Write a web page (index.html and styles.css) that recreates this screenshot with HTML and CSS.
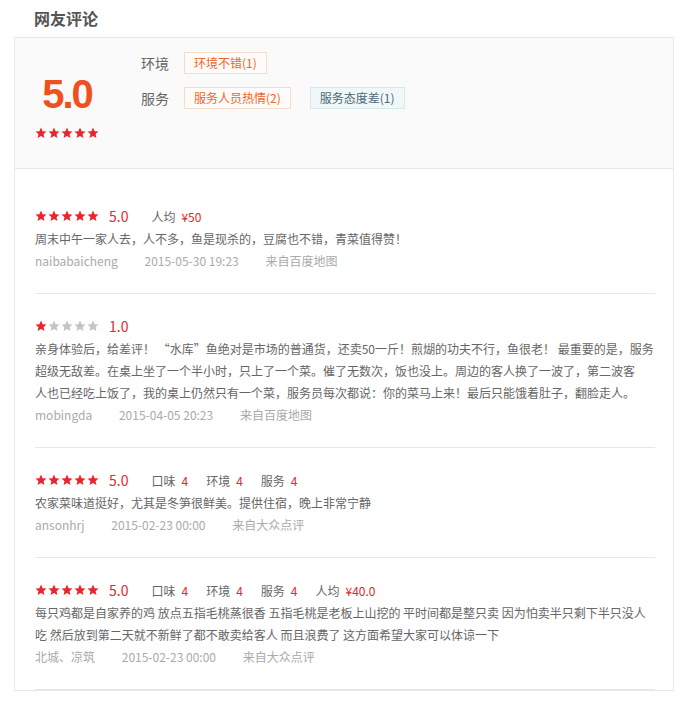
FILE: index.html
```html
<!DOCTYPE html>
<html lang="zh-CN">
<head>
    <meta charset="UTF-8">
    <meta name="viewport" content="width=device-width, initial-scale=1.0">
    <title>网友评论</title>
    <link rel="stylesheet" href="styles.css">
</head>
<body>

<svg class="svg-defs" xmlns="http://www.w3.org/2000/svg">
    <symbol id="star" viewBox="0 0 24 24">
        <path d="M12 1.2l3.2 7.2 7.8.7-5.9 5.2 1.8 7.7L12 18l-6.9 4 1.8-7.7L1 9.1l7.8-.7z"/>
    </symbol>
</svg>

<div class="page">
    <h2 class="title">网友评论</h2>
    <div class="comments">
        <div class="summary">
            <div class="score">
                <div class="score-num">5.0</div>
                <div class="stars stars-big">
                    <svg class="star on"><use href="#star"/></svg>
                    <svg class="star on"><use href="#star"/></svg>
                    <svg class="star on"><use href="#star"/></svg>
                    <svg class="star on"><use href="#star"/></svg>
                    <svg class="star on"><use href="#star"/></svg>
                </div>
            </div>
            <div class="tag-rows">
                <div class="tag-row">
                    <span class="tag-label">环境</span>
                    <span class="tag tag-good">环境不错(1)</span>
                </div>
                <div class="tag-row">
                    <span class="tag-label">服务</span>
                    <span class="tag tag-good">服务人员热情(2)</span>
                    <span class="tag tag-bad">服务态度差(1)</span>
                </div>
            </div>
        </div>

        <ul class="review-list">
            <li class="review">
                <div class="review-head">
                    <span class="stars">
                        <svg class="star on"><use href="#star"/></svg>
                        <svg class="star on"><use href="#star"/></svg>
                        <svg class="star on"><use href="#star"/></svg>
                        <svg class="star on"><use href="#star"/></svg>
                        <svg class="star on"><use href="#star"/></svg>
                    </span>
                    <span class="rating">5.0</span>
                    <span class="item"><span class="item-label">人均</span><span class="item-value">¥50</span></span>
                </div>
                <p class="review-text">周末中午一家人去，人不多，鱼是现杀的，豆腐也不错，青菜值得赞！</p>
                <div class="review-meta">
                    <span>naibabaicheng</span>
                    <span>2015-05-30 19:23</span>
                    <span>来自百度地图</span>
                </div>
            </li>
            <li class="review">
                <div class="review-head">
                    <span class="stars">
                        <svg class="star on"><use href="#star"/></svg>
                        <svg class="star"><use href="#star"/></svg>
                        <svg class="star"><use href="#star"/></svg>
                        <svg class="star"><use href="#star"/></svg>
                        <svg class="star"><use href="#star"/></svg>
                    </span>
                    <span class="rating">1.0</span>
                </div>
                <p class="review-text">亲身体验后，给差评！ “水库”鱼绝对是市场的普通货，还卖50一斤！煎煳的功夫不行，鱼很老！ 最重要的是，服务超级无敌差。在桌上坐了一个半小时，只上了一个菜。催了无数次，饭也没上。周边的客人换了一波了，第二波客<br>人也已经吃上饭了，我的桌上仍然只有一个菜，服务员每次都说：你的菜马上来！最后只能饿着肚子，翻脸走人。</p>
                <div class="review-meta">
                    <span>mobingda</span>
                    <span>2015-04-05 20:23</span>
                    <span>来自百度地图</span>
                </div>
            </li>
            <li class="review">
                <div class="review-head">
                    <span class="stars">
                        <svg class="star on"><use href="#star"/></svg>
                        <svg class="star on"><use href="#star"/></svg>
                        <svg class="star on"><use href="#star"/></svg>
                        <svg class="star on"><use href="#star"/></svg>
                        <svg class="star on"><use href="#star"/></svg>
                    </span>
                    <span class="rating">5.0</span>
                    <span class="item"><span class="item-label">口味</span><span class="item-value">4</span></span>
                    <span class="item"><span class="item-label">环境</span><span class="item-value">4</span></span>
                    <span class="item"><span class="item-label">服务</span><span class="item-value">4</span></span>
                </div>
                <p class="review-text">农家菜味道挺好，尤其是冬笋很鲜美。提供住宿，晚上非常宁静</p>
                <div class="review-meta">
                    <span>ansonhrj</span>
                    <span>2015-02-23 00:00</span>
                    <span>来自大众点评</span>
                </div>
            </li>
            <li class="review">
                <div class="review-head">
                    <span class="stars">
                        <svg class="star on"><use href="#star"/></svg>
                        <svg class="star on"><use href="#star"/></svg>
                        <svg class="star on"><use href="#star"/></svg>
                        <svg class="star on"><use href="#star"/></svg>
                        <svg class="star on"><use href="#star"/></svg>
                    </span>
                    <span class="rating">5.0</span>
                    <span class="item"><span class="item-label">口味</span><span class="item-value">4</span></span>
                    <span class="item"><span class="item-label">环境</span><span class="item-value">4</span></span>
                    <span class="item"><span class="item-label">服务</span><span class="item-value">4</span></span>
                    <span class="item"><span class="item-label">人均</span><span class="item-value">¥40.0</span></span>
                </div>
                <p class="review-text">每只鸡都是自家养的鸡 放点五指毛桃蒸很香 五指毛桃是老板上山挖的 平时间都是整只卖 因为怕卖半只剩下半只没人吃 然后放到第二天就不新鲜了都不敢卖给客人 而且浪费了 这方面希望大家可以体谅一下</p>
                <div class="review-meta">
                    <span>北城、凉筑</span>
                    <span>2015-02-23 00:00</span>
                    <span>来自大众点评</span>
                </div>
            </li>
        </ul>
    </div>
</div>

</body>
</html>
```

FILE: styles.css
```css
body {
    font-family: "Noto Sans CJK SC", "Liberation Sans", sans-serif;
    margin: 0;
    background-color: #fff;
    color: #666;
}
.svg-defs {
    display: none;
}
.page {
    padding: 0 14px;
}
.title {
    margin: 0;
    padding-left: 20px;
    font-size: 16px;
    line-height: 37px;
    font-weight: bold;
    color: #555;
}
.comments {
    border: 1px solid #e8e8e8;
}
.summary {
    display: flex;
    box-sizing: border-box;
    height: 131px;
    padding: 14px 20px 0;
    background-color: #fafafa;
    border-bottom: 1px solid #e8e8e8;
}
.score {
    width: 64px;
    margin-top: 18px;
    margin-right: 42px;
    text-align: center;
}
.score-num {
    font-family: "Liberation Sans", sans-serif;
    font-size: 40px;
    line-height: 48px;
    font-weight: bold;
    letter-spacing: -2px;
    color: #f0501e;
}
.stars {
    display: flex;
    gap: 1px;
}
.stars-big {
    margin-top: 9px;
}
.star {
    width: 12px;
    height: 12px;
    fill: currentColor;
    color: #c4c4c4;
}
.star.on {
    color: #e8262d;
}
.tag-row {
    display: flex;
    align-items: center;
    margin-bottom: 13px;
}
.tag-label {
    font-size: 14px;
    line-height: 22px;
    margin-right: 15px;
}
.tag {
    font-size: 12px;
    line-height: 20px;
    padding: 0 9px;
    margin-right: 19px;
    border: 1px solid;
}
.tag-good {
    color: #f0652a;
    background-color: #fffbf8;
    border-color: #f8dccb;
}
.tag-bad {
    color: #4d6776;
    background-color: #eff7f9;
    border-color: #d6e8ec;
}
.review-list {
    list-style: none;
    margin: 0;
    padding: 15px 18px 0 20px;
}
.review {
    padding: 20px 0 21px;
    border-bottom: 1px solid #e8e8e8;
}
.review-head {
    display: flex;
    align-items: center;
    height: 24px;
    font-size: 12px;
}
.rating {
    margin-left: 10px;
    margin-right: 23px;
    font-size: 14px;
    color: #e8262d;
}
.item {
    margin-right: 18px;
}
.item-label {
    margin-right: 6px;
}
.item-value {
    color: #e8262d;
}
.review-text {
    margin: 0;
    font-size: 12px;
    line-height: 22px;
    color: #666;
}
.review-meta {
    font-size: 12px;
    line-height: 22px;
    color: #aaa;
}
.review-meta span {
    margin-right: 24px;
}
```
